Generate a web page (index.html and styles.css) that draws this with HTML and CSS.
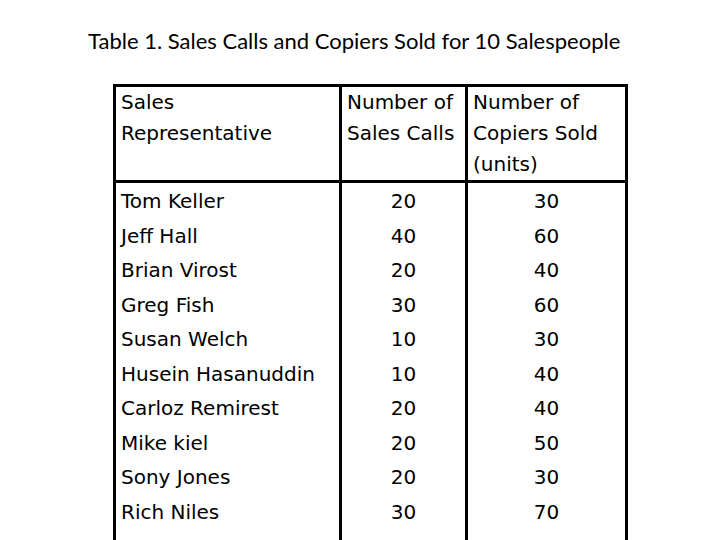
FILE: index.html
```html
<!DOCTYPE html>
<html>
<head>
<meta charset="utf-8">
<link rel="stylesheet" href="styles.css">
</head>
<body>
<div class="page">
  <h1 class="title">Table 1. Sales Calls and Copiers Sold for 10 Salespeople</h1>
  <table class="data">
    <thead>
      <tr>
        <th class="c1">Sales<br>Representative</th>
        <th class="c2">Number of<br>Sales Calls</th>
        <th class="c3">Number of<br>Copiers Sold<br>(units)</th>
      </tr>
    </thead>
    <tbody>
      <tr><td class="c1">Tom Keller</td><td class="num">20</td><td class="num">30</td></tr>
      <tr><td class="c1">Jeff Hall</td><td class="num">40</td><td class="num">60</td></tr>
      <tr><td class="c1">Brian Virost</td><td class="num">20</td><td class="num">40</td></tr>
      <tr><td class="c1">Greg Fish</td><td class="num">30</td><td class="num">60</td></tr>
      <tr><td class="c1">Susan Welch</td><td class="num">10</td><td class="num">30</td></tr>
      <tr><td class="c1">Husein Hasanuddin</td><td class="num">10</td><td class="num">40</td></tr>
      <tr><td class="c1">Carloz Remirest</td><td class="num">20</td><td class="num">40</td></tr>
      <tr><td class="c1">Mike kiel</td><td class="num">20</td><td class="num">50</td></tr>
      <tr><td class="c1">Sony Jones</td><td class="num">20</td><td class="num">30</td></tr>
      <tr><td class="c1">Rich Niles</td><td class="num">30</td><td class="num">70</td></tr>
      <tr class="spacer"><td></td><td></td><td></td></tr>
    </tbody>
  </table>
</div>
</body>
</html>
```
FILE: styles.css
```css
html, body {
  margin: 0;
  padding: 0;
  background: #ffffff;
  width: 720px;
  height: 540px;
  overflow: hidden;
}

.page {
  padding-top: 25px;
}

.title {
  margin: 0 0 0 88px;
  font-family: Lato, "Open Sans", sans-serif;
  font-weight: normal;
  font-size: 22px;
  line-height: 31px;
  color: #000;
  white-space: nowrap;
}

.data {
  margin: 28px 0 0 113px;
  border-collapse: separate;
  border-spacing: 0;
  border: 3px solid #000;
  border-bottom: none;
  font-family: "DejaVu Sans", Verdana, sans-serif;
  font-size: 20px;
  color: #000;
  table-layout: fixed;
  width: 515px;
}

.data th {
  font-weight: normal;
  text-align: left;
  vertical-align: top;
  line-height: 31px;
  height: 94px;
  padding: 0 0 0 5px;
  border-bottom: 3px solid #000;
  box-sizing: border-box;
}

.data th.c1 { width: 223px; }
.data th.c2 { width: 126px; }
.data th.c3 { width: 160px; }

.data th + th,
.data td + td {
  border-left: 3px solid #000;
}

.data td {
  padding: 3px 0 0 0;
  line-height: 31.5px;
  white-space: nowrap;
}

.data td.c1 {
  padding-left: 5px;
}

.data td.num {
  text-align: center;
}

.data tr.spacer td {
  height: 40px;
}
```
